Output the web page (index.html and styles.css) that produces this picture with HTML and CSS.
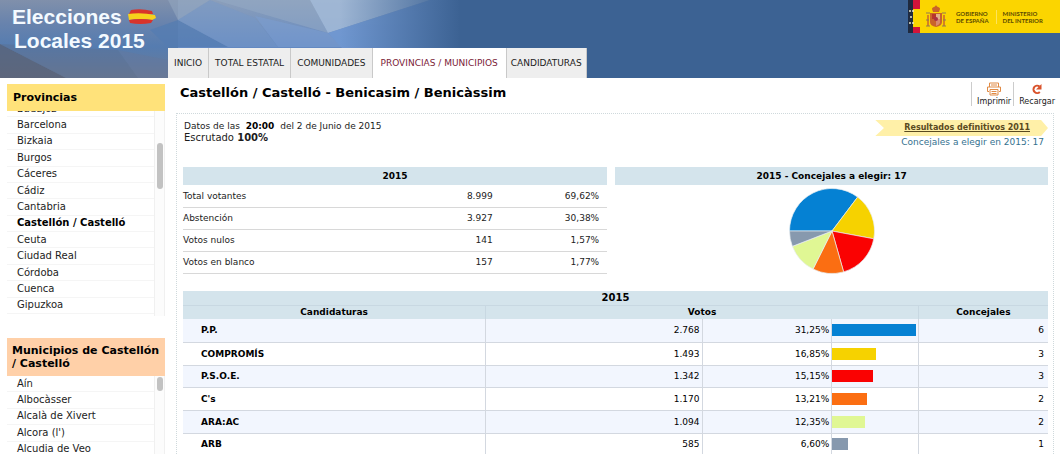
FILE: index.html
```html
<!DOCTYPE html>
<html lang="es">
<head>
<meta charset="utf-8">
<title>Elecciones Locales 2015</title>
<link rel="stylesheet" href="styles.css">
</head>
<body>
<header class="top">
  <svg class="facets" viewBox="0 0 480 78" preserveAspectRatio="none" aria-hidden="true">
    <defs>
      <linearGradient id="sky" x1="0" y1="0" x2="0" y2="1"><stop offset="0" stop-color="#8c9fba"/><stop offset=".6" stop-color="#6389c2"/><stop offset="1" stop-color="#5b84c0"/></linearGradient>
      <linearGradient id="left" x1="0" y1="0" x2="0" y2="1"><stop offset="0" stop-color="#8090ab"/><stop offset=".3" stop-color="#6883ad"/><stop offset=".6" stop-color="#557cb0"/><stop offset="1" stop-color="#6b7a94"/></linearGradient>
      <linearGradient id="fade" x1="0" y1="0" x2="1" y2="0"><stop offset="0" stop-color="#3c6293" stop-opacity="0"/><stop offset="1" stop-color="#3c6293"/></linearGradient>
    </defs>
    <rect width="480" height="78" fill="url(#sky)"/>
    <rect width="178" height="78" fill="url(#left)"/>
    <polygon points="0,44 66,78 0,78" fill="#586074" opacity=".75"/>
    <polygon points="0,44 66,78 138,78 118,50" fill="#5c6d8c" opacity=".4"/>
    <polygon points="118,50 168,60 168,78 138,78" fill="#66799c" opacity=".4"/>
    <polygon points="178,20 210,0 168,0" fill="#93a6c0" opacity=".6"/>
    <polygon points="178,20 228,47 168,47 150,30" fill="#547cb2" opacity=".75"/>
    <polygon points="210,0 178,20 228,47 278,47 255,18" fill="#7697c8" opacity=".5"/>
    <polygon points="215,0 310,0 328,33" fill="#93a9c5" opacity=".55"/>
    <polygon points="255,16 328,33 342,47 278,47" fill="#7b9ed2" opacity=".55"/>
    <polygon points="310,0 430,0 328,33" fill="#a3bbd8" opacity=".85"/>
    <polygon points="328,33 430,0 480,0 480,48 342,48" fill="#7098d2" opacity=".9"/>
    <rect x="340" width="120" height="78" fill="url(#fade)"/>
    <rect x="459" width="21" height="78" fill="#3c6293"/>
  </svg>
  <a class="brand" href="#">
    <span class="brand-line">Elecciones
      <svg class="flag" viewBox="0 0 28 16" aria-hidden="true"><path d="M3 1 Q13 -1 24 2 L25 5 L1 5Z" fill="#d8342b"/><path d="M0 5 Q13 3 27 6 L28 9 L24 11 Q12 9 1 11Z" fill="#f7d21c"/><path d="M1 11 Q12 9 25 11 L23 14 Q12 16 2 14Z" fill="#d8342b"/></svg>
    </span>
    <span class="brand-line second">Locales 2015</span>
  </a>
  <nav class="tabs">
    <a href="#">INICIO</a>
    <a href="#">TOTAL ESTATAL</a>
    <a href="#">COMUNIDADES</a>
    <a href="#" class="current">PROVINCIAS / MUNICIPIOS</a>
    <a href="#">CANDIDATURAS</a>
  </nav>
  <div class="gov">
    <svg class="gov-arms" viewBox="0 0 42 33" aria-hidden="true">
      <rect width="12" height="33" fill="#1f2a3f"/><rect x="5" width="7" height="33" fill="#fbd500"/>
      <rect x="5" width="7" height="9" fill="#d2143a"/><rect x="5" y="27" width="7" height="6" fill="#d2143a"/>
      <g fill="#e8e6c8"><circle cx="2" cy="11" r="1"/><circle cx="3" cy="17" r="1"/><circle cx="2" cy="23" r="1"/><circle cx="5" cy="11" r="1"/><circle cx="5" cy="23" r="1"/></g>
      <g fill="#c9642a"><path d="M24 9q0-2 4-2.500q4 .5 4 2.500l-1 3h-6z"/><circle cx="28" cy="6.500" r="1"/><path d="M22 13h12v9q0 4-6 5q-6-1-6-5z"/><path d="M19 15h2v11h-2zM35 15h2v11h-2z" opacity=".75"/></g>
      <path d="M24 14h4v5h-4z" fill="#b8352c"/><path d="M28 19h4v4q-1 2-4 3z" fill="#d88a6e"/><path d="M28 14h4v5h-4z" fill="#e3b08a"/><circle cx="28" cy="19" r="2" fill="#a92f45"/>
      <path d="M18 13h4M34 13h4M18 26h4M34 26h4M18 20h3M35 20h3" stroke="#8f7a52"/>
    </svg>
    <span class="gov-name">GOBIERNO<br>DE ESPAÑA</span>
    <span class="gov-name ministry">MINISTERIO<br>DEL INTERIOR</span>
  </div>
</header>

<div class="page">
  <aside class="side">
    <section>
      <h2 class="side-title">Provincias</h2>
      <div class="scroll provinces">
        <ul>
          <li><a href="#">Badajoz</a></li><li><a href="#">Barcelona</a></li><li><a href="#">Bizkaia</a></li><li><a href="#">Burgos</a></li><li><a href="#">Cáceres</a></li><li><a href="#">Cádiz</a></li><li><a href="#">Cantabria</a></li><li><a href="#" class="chosen">Castellón / Castelló</a></li><li><a href="#">Ceuta</a></li><li><a href="#">Ciudad Real</a></li><li><a href="#">Córdoba</a></li><li><a href="#">Cuenca</a></li><li><a href="#">Gipuzkoa</a></li>
        </ul>
        <div class="track"><div class="thumb"></div></div>
      </div>
    </section>
    <section>
      <h2 class="side-title towns-title">Municipios de Castellón / Castelló</h2>
      <div class="scroll towns">
        <ul>
          <li><a href="#">Aín</a></li><li><a href="#">Albocàsser</a></li><li><a href="#">Alcalà de Xivert</a></li><li><a href="#">Alcora (l')</a></li><li><a href="#">Alcudia de Veo</a></li>
        </ul>
        <div class="track"><div class="thumb"></div></div>
      </div>
    </section>
  </aside>

  <main class="main">
    <div class="heading">
      <h1>Castellón / Castelló - Benicasim / Benicàssim</h1>
      <div class="tools">
        <button type="button"><svg width="16" height="14" viewBox="0 0 16 14" fill="none" stroke="#e08a45" aria-hidden="true"><path d="M3.500 5V1h9v4M3 9.500H1.500V5h13v4.500H13"/><path d="M4 7.500h8v5.500H4zM5.500 9.500h5M5.500 11.500h5M5 3h6"/></svg>Imprimir</button>
        <button type="button"><svg width="16" height="14" viewBox="0 0 16 14" aria-hidden="true"><path d="M10.800 10A3.700 3.700 0 1 1 10.500 4.500" fill="none" stroke="#d9532c" stroke-width="2"/><path d="M12.500 2v5.500h-5.500z" fill="#d9532c"/></svg>Recargar</button>
      </div>
    </div>
    <div class="panel">
      <div class="status">
        <div>
          <p>Datos de las <b class="time">20:00</b> del 2 de Junio de 2015</p>
          <p class="counted">Escrutado <b>100%</b></p>
        </div>
        <div class="past">
          <a class="ribbon" href="#">Resultados definitivos 2011</a>
          <p class="seats">Concejales a elegir en 2015: 17</p>
        </div>
      </div>
      <div class="overview">
        <table class="summary">
          <colgroup><col class="s-label"><col class="s-votes"><col class="s-share"></colgroup>
          <thead><tr><th colspan="3">2015</th></tr></thead>
          <tbody>
            <tr><td>Total votantes</td><td>8.999</td><td>69,62%</td></tr>
            <tr><td>Abstención</td><td>3.927</td><td>30,38%</td></tr>
            <tr><td>Votos nulos</td><td>141</td><td>1,57%</td></tr>
            <tr><td>Votos en blanco</td><td>157</td><td>1,77%</td></tr>
          </tbody>
        </table>
        <section class="chart">
          <h3>2015 - Concejales a elegir: 17</h3>
          <svg width="88" height="88" viewBox="-44 -44 88 88" stroke="#e8eef0" stroke-width=".7" role="img" aria-label="Reparto de concejales">
            <path d="M0 0L-42.500 0A42.500 42.500 0 0 1 25.610 -33.920Z" fill="#0581d3"/>
            <path d="M0 0L25.610 -33.920A42.500 42.500 0 0 1 41.780 7.810Z" fill="#f6d200"/>
            <path d="M0 0L41.780 7.810A42.500 42.500 0 0 1 11.630 40.880Z" fill="#fa0202"/>
            <path d="M0 0L11.630 40.880A42.500 42.500 0 0 1 -18.940 38.040Z" fill="#fb6e12"/>
            <path d="M0 0L-18.940 38.040A42.500 42.500 0 0 1 -39.630 15.350Z" fill="#e0f794"/>
            <path d="M0 0L-39.630 15.350A42.500 42.500 0 0 1 -42.500 0Z" fill="#8799ae"/>
          </svg>
        </section>
      </div>
      <table class="results">
        <colgroup><col class="r-party"><col class="r-votes"><col class="r-share"><col class="r-bar"><col class="r-seats"></colgroup>
        <thead>
          <tr><th colspan="5" class="year">2015</th></tr>
          <tr><th>Candidaturas</th><th colspan="3">Votos</th><th>Concejales</th></tr>
        </thead>
        <tbody>
          <tr><th scope="row">P.P.</th><td>2.768</td><td>31,25%</td><td><div class="bar pp" style="width:98%"></div></td><td>6</td></tr>
          <tr><th scope="row">COMPROMÍS</th><td>1.493</td><td>16,85%</td><td><div class="bar compromis" style="width:51%"></div></td><td>3</td></tr>
          <tr><th scope="row">P.S.O.E.</th><td>1.342</td><td>15,15%</td><td><div class="bar psoe" style="width:48%"></div></td><td>3</td></tr>
          <tr><th scope="row">C's</th><td>1.170</td><td>13,21%</td><td><div class="bar cs" style="width:41%"></div></td><td>2</td></tr>
          <tr><th scope="row">ARA:AC</th><td>1.094</td><td>12,35%</td><td><div class="bar ara" style="width:38%"></div></td><td>2</td></tr>
          <tr><th scope="row">ARB</th><td>585</td><td>6,60%</td><td><div class="bar arb" style="width:19%"></div></td><td>1</td></tr>
        </tbody>
      </table>
    </div>
  </main>
</div>
</body>
</html>
```
FILE: styles.css
```css
* { box-sizing: border-box; }
html { overflow: hidden; }
body { margin: 0; background: #fff; color: #1c1c1c; font: 9px/12px Verdana, "DejaVu Sans", sans-serif; }
h1, h2, h3, p, ul { margin: 0; padding: 0; }
ul { list-style: none; }
a { color: inherit; text-decoration: none; }
table { border-collapse: collapse; table-layout: fixed; }
td, th { padding: 0; }

.top { position: relative; display: flex; height: 78px; background: #3c6293; }
.facets { position: absolute; left: 0; top: 0; width: 480px; height: 78px; }
.brand { position: relative; width: 168px; padding: 5px 0 0 12px; color: #f4faff; font: bold 21px/24px "Liberation Sans", Arial, sans-serif; }
.brand-line { display: flex; align-items: center; gap: 6px; white-space: nowrap; }
.brand-line.second { padding-left: 2px; }
.flag { width: 28px; height: 16px; }
.tabs { position: relative; display: flex; align-self: flex-end; height: 30px; background: #fff; }
.tabs a { display: flex; align-items: center; padding: 0 6px; border-right: 1px solid #c9c9c9; background: #eee; }
.tabs .current { padding: 0 8px; background: #fff; color: #7b2337; }
.tabs a:last-child { padding: 0 4px; }
.gov { display: flex; align-items: center; align-self: flex-start; width: 152px; height: 33px; margin-left: auto; background: #fbd500; color: #5c4b00; }
.gov-arms { width: 42px; height: 33px; }
.gov-name { padding-left: 6px; font: bold 6px/7px "DejaVu Sans", sans-serif; font: bold 6px/7px Lato, sans-serif; }
.ministry { margin-left: 7px; border-left: 1px solid #fde45c; }

.page { display: flex; }
.side { width: 176px; padding: 6px 11px 0 7px; }
.side-title { padding: 7px 6px; background: #ffe27a; color: #000; font-size: 11px; line-height: 13px; }
.towns-title { margin-top: 22px; padding: 6px 5px; background: #ffd0a8; }
.scroll { display: flex; align-items: flex-end; overflow: hidden; font-size: 10px; }
.provinces { height: 205px; }
.scroll ul { display: grid; flex: 1; grid-auto-rows: 1fr; }
.scroll li { display: flex; align-items: center; padding-left: 10px; border-bottom: 1px solid #f5f5f5; white-space: nowrap; }
.provinces ul { height: 213px; margin-bottom: 2px; }
.towns ul { height: 82px; }
.chosen { color: #000; font-weight: bold; }
.track { align-self: stretch; width: 11px; padding: 0 2px; border: solid #f0f0f0; border-width: 0 1px; background: #fcfcfc; }
.thumb { width: 6px; border-radius: 3px; background: #c2c2c2; }
.provinces .thumb { height: 46px; margin-top: 32px; }
.towns .thumb { height: 14px; margin-top: 1px; }

.main { flex: 1; padding-right: 6px; }
.heading { display: flex; justify-content: space-between; height: 35px; padding-left: 4px; }
h1 { padding-top: 7px; color: #000; font-size: 13px; line-height: 16px; }
.tools { display: flex; margin-right: -3px; padding-top: 4px; }
.tools button { display: flex; flex-direction: column; align-items: center; gap: 1px; height: 24px; padding: 0 2px 0 5px; border: 0; border-left: 1px solid #ccc; background: none; color: #222; font: 8px/10px Verdana, "DejaVu Sans", sans-serif; }
.tools svg { flex: none; }
.panel { padding: 6px 5px 6px 6px; border: 1px dotted #cfd9dc; border-bottom: 0; }
.status { display: flex; justify-content: space-between; height: 47px; padding-left: 1px; }
.time { margin: 0 3px; color: #000; }
.counted { font-size: 10px; line-height: 11px; }
.ribbon { display: block; padding: 2px 18px 2px 26px; background: #fff0a8; color: #5a4a1e; clip-path: polygon(0 0, 96% 0, 100% 50%, 96% 100%, 0 100%, 5% 50%); font-size: 8px; font-weight: bold; text-align: right; text-decoration: underline; }
.seats { padding: 0 4px 0 26px; color: #35728f; }
.overview { display: flex; gap: 8px; height: 124px; }
.summary { flex: 49; height: 106px; }
.summary th, .chart h3 { height: 18px; background: #d4e4ec; color: #000; font-size: 9px; line-height: 18px; text-align: center; }
.summary td { height: 22px; border-bottom: 1px solid #d8d8d8; text-align: right; }
.summary td:first-child { text-align: left; }
.summary td:last-child { padding-right: 8px; }
.s-label { width: 50%; } .s-votes { width: 23%; } .s-share { width: 27%; }
.chart { flex: 50; text-align: center; }
.chart svg { margin-top: 2px; }
.results { width: 100%; color: #000; }
.results thead th { height: 14px; border: 1px solid #c8d8e2; border-width: 0 1px 0 0; background: #d4e4ec; line-height: 13px; }
.results thead .year { border-bottom-width: 1px; font-size: 10px; }
.results tbody th { padding-left: 18px; text-align: left; }
.results tbody th, .results td { height: 23px; border: 1px solid #d3d8e0; border-width: 0 1px 1px 0; }
.results tbody tr:nth-child(3n) > * { height: 22px; }
.results tbody tr:nth-child(odd) { background: #f2f6fe; }
.results td { padding-right: 2px; text-align: right; }
.results td:nth-child(4) { padding-right: 0; }
.results td:last-child { padding-right: 4px; }
.results tr > :last-child { border-right: 0; }
.r-party { width: 35%; } .r-votes { width: 25%; } .r-share { width: 15%; } .r-bar { width: 10%; } .r-seats { width: 15%; }
.bar { height: 12px; }
.pp { background: #0581d3; } .compromis { background: #f6d200; } .psoe { background: #fa0202; } .cs { background: #fb6e12; } .ara { background: #e0f794; } .arb { background: #8799ae; }
```
